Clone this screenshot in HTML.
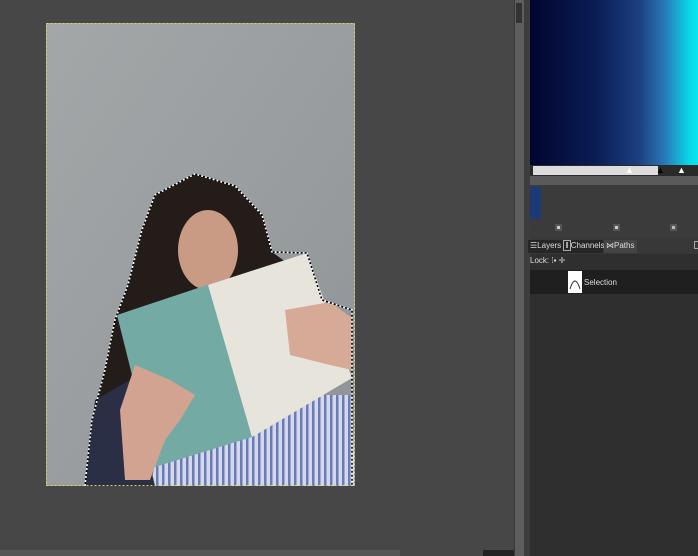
<!DOCTYPE html>
<html><head><meta charset="utf-8"><style>
*{margin:0;padding:0;box-sizing:border-box}
body{width:698px;height:556px;background:#474747;position:relative;overflow:hidden;font-family:"Liberation Sans",sans-serif}
.a{position:absolute}
</style></head><body>
<div class="a" style="left:0;top:0;width:514px;height:556px;background:#474747"></div>
<div class="a" style="left:0;top:550px;width:400px;height:6px;background:#555"></div>
<div class="a" style="left:483px;top:550px;width:31px;height:6px;background:#222"></div>
<div class="a" style="left:514px;top:0;width:10px;height:556px;background:#5e5e5e;border-left:1px solid #3a3a3a"></div>
<div class="a" style="left:516px;top:3px;width:6px;height:20px;background:#333"></div>
<div class="a" style="left:524px;top:0;width:6px;height:556px;background:#3d3d3d"></div>
<svg class="a" style="left:46px;top:23px" width="309" height="463" viewBox="46 23 309 463">
<defs><pattern id="st" width="6" height="10" patternUnits="userSpaceOnUse"><rect width="6" height="10" fill="#d4d8ea"/><rect width="2.5" height="10" fill="#6a7cb8"/></pattern>
<linearGradient id="bg" x1="0" y1="0" x2="1" y2="1"><stop offset="0" stop-color="#a4a7a8"/><stop offset="1" stop-color="#8f9498"/></linearGradient></defs>
<rect x="46" y="23" width="309" height="463" fill="url(#bg)"/>
<polygon points="85,486 92,420 105,370 115,320 128,285 142,230 155,195 195,174 235,186 262,215 272,252 290,265 300,300 300,486" fill="#231c18"/>
<ellipse cx="208" cy="250" rx="30" ry="40" fill="#c99a84"/>
<polygon points="150,486 165,420 240,430 300,395 352,395 355,486" fill="url(#st)"/>
<polygon points="85,486 95,400 130,380 155,486" fill="#2a2f45"/>
<polygon points="117,315 210,284 252,437 155,467" fill="#73aaa4"/>
<polygon points="208,285 307,253 352,378 252,437" fill="#e7e4dc"/>
<polygon points="285,310 330,302 352,318 352,370 330,365 290,355" fill="#d7aa98"/>
<polygon points="120,410 135,365 170,380 195,395 180,420 165,440 150,480 125,480" fill="#d3a391"/>
<path d="M85,486 L92,420 105,370 115,320 128,285 142,230 155,195 195,174 235,186 262,215 272,252 307,253 322,300 352,310 352,486" fill="none" stroke="#fff" stroke-width="1.5" stroke-dasharray="2,2"/>
<path d="M85,486 L92,420 105,370 115,320 128,285 142,230 155,195 195,174 235,186 262,215 272,252 307,253 322,300 352,310 352,486" fill="none" stroke="#000" stroke-width="1.5" stroke-dasharray="2,2" stroke-dashoffset="2"/>
<rect x="46.5" y="23.5" width="308" height="462" fill="none" stroke="#d8d860" stroke-width="1" stroke-dasharray="2,2"/>
</svg>
<div class="a" style="left:530px;top:0;width:168px;height:556px;background:#2f2f2f"></div>
<div class="a" style="left:530px;top:0;width:168px;height:165px;background:linear-gradient(90deg,#000530 0%,#0b1d55 40%,#1c3f80 65%,#2a78b8 80%,#08d8e8 95%,#05e8f0 100%)"></div>
<div class="a" style="left:530px;top:165px;width:168px;height:11px;background:#2a2a2a"></div>
<div class="a" style="left:533px;top:166px;width:125px;height:9px;background:#dcdcdc"></div>
<div class="a" style="left:625px;top:166px;color:#fff;font-size:9px;line-height:9px">▲</div>
<div class="a" style="left:656px;top:166px;color:#000;font-size:9px;line-height:9px">▲</div>
<div class="a" style="left:677px;top:166px;color:#fff;font-size:9px;line-height:9px">▲</div>
<div class="a" style="left:530px;top:176px;width:168px;height:9px;background:#5a5a5a"></div>
<div class="a" style="left:530px;top:185px;width:168px;height:52px;background:#3b3b3b"></div>
<div class="a" style="left:530px;top:187px;width:11px;height:32px;background:#1c3a78"></div>
<div class="a" style="left:555px;top:224px;width:7px;height:7px;background:#ccc;border:2px solid #555"></div>
<div class="a" style="left:613px;top:224px;width:7px;height:7px;background:#ccc;border:2px solid #555"></div>
<div class="a" style="left:670px;top:224px;width:7px;height:7px;background:#bbb;border:2px solid #555"></div>
<div class="a" style="left:530px;top:237px;width:168px;height:17px;background:#383838"></div>
<div class="a" style="left:528px;top:240px;height:13px;width:75px;background:#262626"></div>
<div class="a" style="left:530px;top:241px;font-size:8px;color:#ddd;white-space:nowrap">☰Layers <span style="border:1px solid #aaa;padding:0 1px">‖</span>Channels</div>
<div class="a" style="left:604px;top:240px;width:33px;height:13px;background:#444"></div>
<div class="a" style="left:606px;top:241px;font-size:8px;color:#ddd">⋈Paths</div>
<div class="a" style="left:694px;top:241px;width:6px;height:8px;border:1px solid #aaa"></div>
<div class="a" style="left:530px;top:256px;font-size:8px;color:#ddd">Lock: ⁞▪ ✛</div>
<div class="a" style="left:530px;top:270px;width:168px;height:24px;background:#1f1f1f"></div>
<div class="a" style="left:568px;top:271px;width:14px;height:22px;background:#fff"><svg width="14" height="22"><path d="M2,18 Q7,2 12,18" fill="none" stroke="#333" stroke-width="1"/></svg></div>
<div class="a" style="left:584px;top:278px;font-size:8px;color:#ddd">Selection</div>
</body></html>
